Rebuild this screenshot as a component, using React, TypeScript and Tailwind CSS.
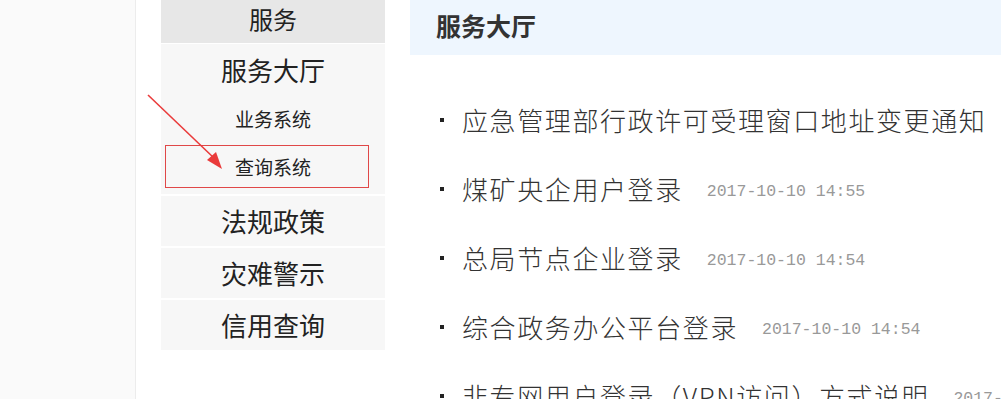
import React from 'react';

const cjk = '"Noto Sans CJK SC", "Noto Sans", sans-serif';

const NEWS = [
  { title: '应急管理部行政许可受理窗口地址变更通知', date: '' },
  { title: '煤矿央企用户登录', date: '2017-10-10 14:55' },
  { title: '总局节点企业登录', date: '2017-10-10 14:54' },
  { title: '综合政务办公平台登录', date: '2017-10-10 14:54' },
  { title: '非专网用户登录（VPN访问）方式说明', date: '2017-10-10 14:54' },
];

const MENU = ['法规政策', '灾难警示', '信用查询'];

function Arrow() {
  return (
    <svg className="absolute left-[146px] top-[92px] pointer-events-none" width="84" height="82" viewBox="0 0 84 82">
      <line x1="2" y1="3" x2="69" y2="67" stroke="#ea3b3b" strokeWidth="1.6" />
      <polygon points="76,77 61,68 70,60" fill="#ea3b3b" />
    </svg>
  );
}

export default function App() {
  return (
    <div className="relative flex h-[399px] w-[1001px] overflow-hidden bg-white" style={{ fontFamily: cjk }}>
      <div className="w-[136px] shrink-0 border-r border-[#ececec] bg-[#fafafa]" />

      <aside className="ml-[25px] w-[224px] shrink-0 text-[#222]">
        <div className="flex h-[43px] items-center justify-center bg-[#e7e7e7] pb-[5px] text-[24px] leading-none">服务</div>
        <div className="mt-[1px] h-[150px] bg-[#f7f7f7]">
          <div className="flex h-[52px] items-center justify-center text-[26px] leading-none">服务大厅</div>
          <div className="flex h-[48px] items-center justify-center pb-[4px] text-[19px] leading-none">业务系统</div>
          <div className="relative flex h-[45px] items-center justify-center text-[19px] leading-none">
            查询系统
            <div className="absolute left-[4px] top-[1px] h-[43px] w-[204px] border border-[#e04848]" />
          </div>
        </div>
        <div className="mt-[2px] flex flex-col gap-[2px]">
          {MENU.map((m) => (
            <div key={m} className="flex h-[50px] items-center justify-center bg-[#f7f7f7] text-[26px] leading-none">
              {m}
            </div>
          ))}
        </div>
      </aside>

      <main className="ml-[25px] flex-1">
        <div className="flex h-[55px] items-center bg-[#eef6fe] pb-[4px] pl-[26px] text-[25px] font-bold leading-none text-[#333]">
          服务大厅
        </div>
        <ul className="pt-[30px]">
          {NEWS.map((n) => (
            <li key={n.title} className="flex h-[69px] items-center whitespace-nowrap">
              <span className="ml-[30px] h-[4px] w-[4px] shrink-0 bg-[#222]" />
              <span className="ml-[18px] text-[26px] font-light tracking-[1.6px] leading-none text-[#333]">{n.title}</span>
              {n.date && (
                <span
                  className="ml-[24px] mt-[8px] text-[16.5px] leading-none text-[#999]"
                  style={{ fontFamily: '"Liberation Mono", monospace' }}
                >
                  {n.date}
                </span>
              )}
            </li>
          ))}
        </ul>
      </main>

      <Arrow />
    </div>
  );
}
